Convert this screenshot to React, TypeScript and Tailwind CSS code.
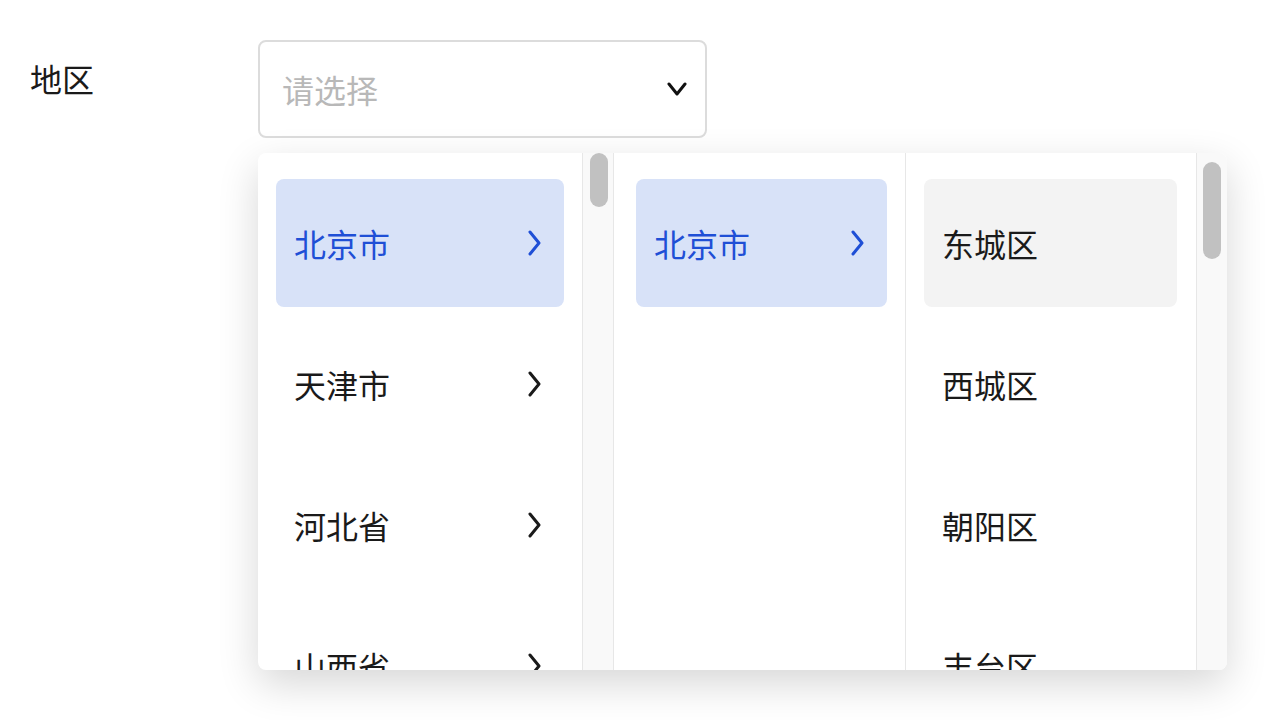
import React from 'react';

const provinces = ['北京市', '天津市', '河北省', '山西省'];
const cities = ['北京市'];
const districts = ['东城区', '西城区', '朝阳区', '丰台区'];

const font = { fontFamily: '"Noto Sans CJK SC", "Noto Sans", sans-serif' };

const ChevronRight: React.FC<{ color: string }> = ({ color }) => (
  <svg width="13" height="26" viewBox="0 0 13 26" fill="none">
    <polyline points="2,2 11,13 2,24" stroke={color} strokeWidth="3" strokeLinecap="round" strokeLinejoin="round" />
  </svg>
);

type ItemProps = { label: string; active?: boolean; hover?: boolean; arrow?: boolean };

const Item: React.FC<ItemProps> = ({ label, active, hover, arrow }) => (
  <div
    className={`flex h-[128px] shrink-0 items-center justify-between rounded-[8px] pl-[18px] pr-[23px] text-[32px] ${
      active ? 'bg-[#d8e2f8] text-[#1f4fd6]' : hover ? 'bg-[#f3f3f3] text-[#1a1a1a]' : 'text-[#1a1a1a]'
    }`}
  >
    <span>{label}</span>
    {arrow && <ChevronRight color={active ? '#1f4fd6' : '#1a1a1a'} />}
  </div>
);

const App: React.FC = () => {
  return (
    <div className="relative h-[720px] w-[1280px] overflow-hidden bg-white" style={font}>
      <div className="flex pt-[40px]">
        <div className="w-[258px] pl-[30px] pt-[14px] text-[32px] leading-[48px] text-[#1a1a1a]">地区</div>
        <div className="flex h-[98px] w-[449px] items-center justify-between rounded-[8px] border-2 border-[#dcdcdc] pl-[22px] pr-[18px]">
          <span className="text-[32px] text-[#b8b8b8]">请选择</span>
          <svg width="20" height="16" viewBox="0 0 20 16" fill="none">
            <polyline points="2,3 10,13 18,3" stroke="#111" strokeWidth="3" strokeLinecap="round" strokeLinejoin="round" />
          </svg>
        </div>
      </div>

      {/* cascader popup */}
      <div className="absolute left-[258px] top-[153px] flex h-[517px] w-[969px] overflow-hidden rounded-[8px] bg-white shadow-[0_14px_40px_rgba(0,0,0,0.16)]">
        <div className="flex w-[324px] flex-col gap-[13px] overflow-hidden px-[18px] pt-[26px]">
          {provinces.map((p, i) => (
            <Item key={p} label={p} active={i === 0} arrow />
          ))}
        </div>
        <div className="w-[32px] border-x border-[#e7e7e7] bg-[#f9f9f9] pl-[7px]">
          <div className="h-[54px] w-[18px] rounded-full bg-[#c1c1c1]" />
        </div>

        <div className="flex w-[292px] flex-col gap-[13px] overflow-hidden border-r border-[#e7e7e7] pl-[22px] pr-[18px] pt-[26px]">
          {cities.map((c) => (
            <Item key={c} label={c} active arrow />
          ))}
        </div>

        <div className="flex w-[290px] flex-col gap-[13px] overflow-hidden pl-[18px] pr-[19px] pt-[26px]">
          {districts.map((d, i) => (
            <Item key={d} label={d} hover={i === 0} />
          ))}
        </div>
        <div className="w-[31px] border-l border-[#e7e7e7] bg-[#f9f9f9] pl-[6px] pt-[9px]">
          <div className="h-[97px] w-[18px] rounded-full bg-[#c1c1c1]" />
        </div>
      </div>
    </div>
  );
};

export default App;
